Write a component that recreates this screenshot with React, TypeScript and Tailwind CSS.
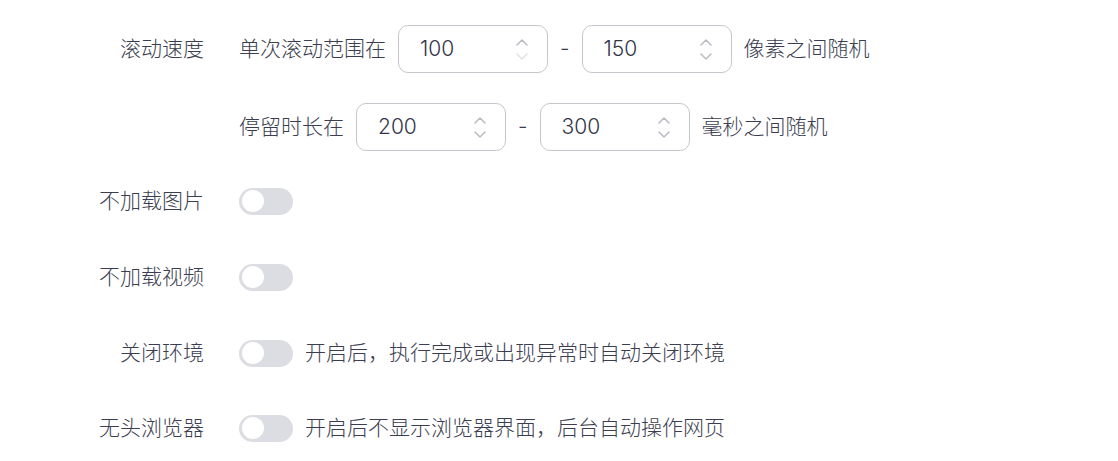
import React from 'react';

const font = { fontFamily: 'Inter, "Noto Sans CJK SC", sans-serif' };

const Chevron = ({ up, light }: { up?: boolean; light?: boolean }) => (
  <svg width="14" height="8" viewBox="0 0 14 8" fill="none">
    <path
      d={up ? 'M2 7 L7 2 L12 7' : 'M2 1 L7 6 L12 1'}
      stroke={light ? '#e1e2e6' : '#b9bbc2'}
      strokeWidth="1.5"
      strokeLinecap="round"
      strokeLinejoin="round"
    />
  </svg>
);

const NumberBox = ({ value, minHit }: { value: string; minHit?: boolean }) => (
  <div className="w-[150px] h-[48px] flex items-center justify-between pl-[21px] pr-[18px] border border-[#c6c7cd] rounded-[10px] bg-white">
    <span className="text-[21px] text-[#33364a]">{value}</span>
    <div className="flex flex-col items-center gap-[7px]">
      <Chevron up />
      <Chevron light={minHit} />
    </div>
  </div>
);

const Toggle = () => (
  <div className="w-[54px] h-[27px] rounded-full bg-[#dcdde2] flex items-center px-[3px]">
    <div className="w-[22px] h-[22px] rounded-full bg-white" />
  </div>
);

const Row = ({ label, children, className = '' }: { label?: string; children: React.ReactNode; className?: string }) => (
  <div className={`flex items-center h-[48px] ${className}`}>
    <div className="w-[204px] text-right shrink-0">{label}</div>
    <div className="ml-[35px] flex items-center gap-[12px]">{children}</div>
  </div>
);

export default function App() {
  return (
    <div className="w-[1118px] h-[461px] bg-white text-[21px] font-light text-[#3b3e50]" style={font}>
      <div className="pt-[25px]">
        <Row label="滚动速度">
          <span>单次滚动范围在</span>
          <NumberBox value="100" minHit />
          <span>-</span>
          <NumberBox value="150" />
          <span>像素之间随机</span>
        </Row>
        <Row className="mt-[30px]">
          <span>停留时长在</span>
          <NumberBox value="200" />
          <span>-</span>
          <NumberBox value="300" />
          <span>毫秒之间随机</span>
        </Row>
        <Row label="不加载图片" className="mt-[26px]">
          <Toggle />
        </Row>
        <Row label="不加载视频" className="mt-[28px]">
          <Toggle />
        </Row>
        <Row label="关闭环境" className="mt-[28px]">
          <Toggle />
          <span>开启后，执行完成或出现异常时自动关闭环境</span>
        </Row>
        <Row label="无头浏览器" className="mt-[27px]">
          <Toggle />
          <span>开启后不显示浏览器界面，后台自动操作网页</span>
        </Row>
      </div>
    </div>
  );
}
